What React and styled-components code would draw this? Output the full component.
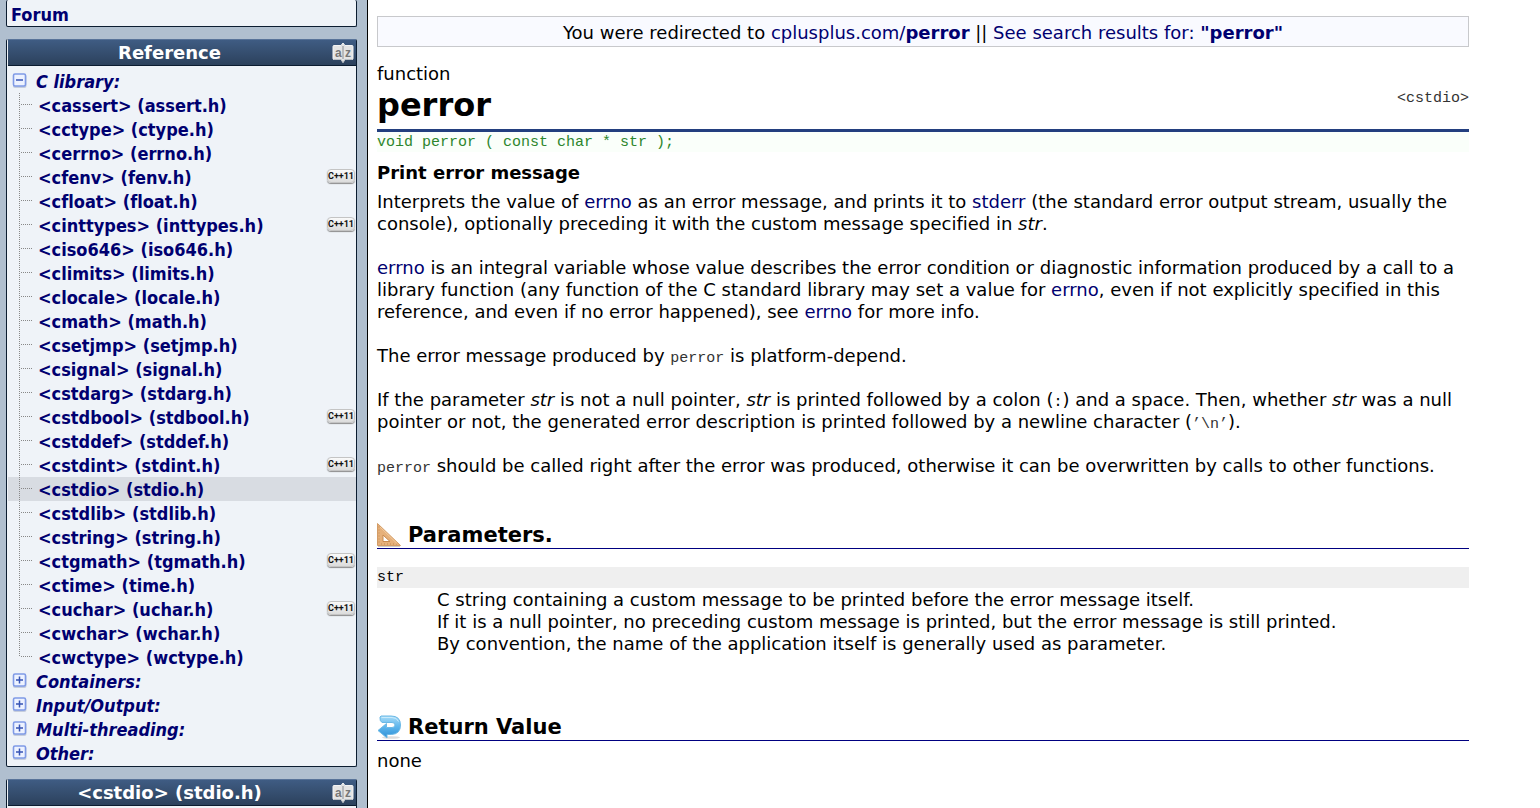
import React, { useState } from 'react'
import styled, { createGlobalStyle } from 'styled-components';

const GlobalStyle = createGlobalStyle`
  body {
    margin: 0;
    background: white;
    color: black;
    font-family: Verdana, "DejaVu Sans", sans-serif;
    font-size: 18px;
    font-variant-ligatures: none;
    line-height: 22px;
  }

  a {
    color: #000070;
    text-decoration: none;
  }

  a:hover {
    text-decoration: underline;
  }
`;

const Page = styled.div`
  display: flex;
  height: 100vh;
  overflow: hidden;
`;

const Sidebar = styled.nav`
  flex: none;
  box-sizing: border-box;
  width: 368px;
  padding: 0 10px 0 6px;
  border-right: 1px solid black;
  background: #b0bfcf;
  font-family: Tahoma, "DejaVu Sans Condensed", "DejaVu Sans", sans-serif;
  font-weight: bold;
`;

const Box = styled.section`
  margin-bottom: 12px;
  padding-left: 1px;
  border: 1px solid #0b1c30;
  border-top: 0;
  border-radius: 2px;
  background: #eff3f8;
`;

const BoxTitle = styled.h4`
  display: flex;
  align-items: center;
  justify-content: center;
  height: 25px;
  margin: 0;
  padding: 0 1px 0 0;
  border-top: 1px solid #587399;
  border-bottom: 1px solid #0b1c30;
  background: linear-gradient(#3f5c83, #2c415c);
  color: white;
  font-size: 18px;
  font-family: Verdana, "DejaVu Sans", sans-serif;
`;

const TitleText = styled.span`
  flex: 1;
  text-align: center;
`;

const IndexButton = styled.button`
  display: flex;
  padding: 0;
  border: 0;
  background: none;
  cursor: pointer;
`;

const TopItem = styled.a`
  display: block;
  padding: 4px 3px 0;
`;

const Tree = styled.ul`
  margin: 0;
  padding: ${props => props.$root ? '3px 0 1px' : '0'};
  list-style: none;
`;

const Row = styled.div`
  display: flex;
  align-items: center;
  height: 24px;
  padding-left: ${props => props.$group ? '4px' : '10px'};
  background: ${props => props.$current ? '#d8dce2' : 'none'};
`;

const RowLink = styled.a`
  flex: 1;
  padding-top: 2px;
`;

const GroupLink = styled.a`
  margin-left: 9px;
  padding-top: 2px;
  font-style: italic;
`;

const Toggle = styled.button`
  display: flex;
  padding: 0;
  border: 0;
  background: none;
  cursor: pointer;
`;

const Connector = styled.svg`
  flex: none;
  margin-right: 5px;
`;

const Badge = styled.span`
  width: 26px;
  height: 12px;
  margin: 0 1px 3px 0;
  border: 1px solid #c4c4c4;
  border-radius: 4px;
  background: linear-gradient(#fafafa, #dcdcdc);
  box-shadow: 0 1px 1px #8c8c8c;
  color: #111;
  font: bold 9px/12px Roboto, sans-serif;
  text-align: center;
`;

const Main = styled.main`
  flex: 1;
  min-width: 0;
  padding: 16px 71px 0 9px;
`;

const Notice = styled.div`
  padding: 5px 0 2px;
  border: 1px solid #c8c9cc;
  background: #f9faff;
  text-align: center;
`;

const Kind = styled.div`
  margin-top: 16px;
`;

const TitleBar = styled.header`
  display: flex;
  align-items: flex-start;
  justify-content: space-between;
  height: 44px;
  border-bottom: 3px solid #233f7f;
`;

const Title = styled.h1`
  margin: 0;
  font-size: 32px;
  line-height: 40px;
`;

const Code = styled.code`
  font-family: "Liberation Mono", monospace;
  font-size: 15px;
  line-height: 15px;
  color: ${props => props.$dim ? '#333' : 'black'};
`;

const Prototype = styled.div`
  height: 18px;
  padding-top: 2px;
  background: #fafffa;
  color: #2d862d;
  font: 15px/18px "Liberation Mono", monospace;
`;

const Summary = styled.div`
  margin: 10px 0 7px;
  font-weight: bold;
`;

const Paragraph = styled.p`
  margin: 0 0 22px;
`;

const Section = styled.section`
  margin-top: ${props => props.$space};
`;

const SectionTitle = styled.h3`
  display: flex;
  align-items: center;
  gap: 7px;
  height: 27px;
  margin: 0;
  border-bottom: 1px solid #000080;
  font-size: 21px;
`;

const Terms = styled.dl`
  margin: 18px 0 0;
`;

const Term = styled.dt`
  height: 21px;
  background: #efefef;
  font: 15px/21px "Liberation Mono", monospace;
`;

const Details = styled.dd`
  margin: 0 0 0 60px;
  padding-top: 1px;
`;

const Result = styled.div`
  margin-top: 9px;
`;

const headers = [
  ['cassert', 'assert.h'],
  ['cctype', 'ctype.h'],
  ['cerrno', 'errno.h'],
  ['cfenv', 'fenv.h', true],
  ['cfloat', 'float.h'],
  ['cinttypes', 'inttypes.h', true],
  ['ciso646', 'iso646.h'],
  ['climits', 'limits.h'],
  ['clocale', 'locale.h'],
  ['cmath', 'math.h'],
  ['csetjmp', 'setjmp.h'],
  ['csignal', 'signal.h'],
  ['cstdarg', 'stdarg.h'],
  ['cstdbool', 'stdbool.h', true],
  ['cstddef', 'stddef.h'],
  ['cstdint', 'stdint.h', true],
  ['cstdio', 'stdio.h'],
  ['cstdlib', 'stdlib.h'],
  ['cstring', 'string.h'],
  ['ctgmath', 'tgmath.h', true],
  ['ctime', 'time.h'],
  ['cuchar', 'uchar.h', true],
  ['cwchar', 'wchar.h'],
  ['cwctype', 'wctype.h'],
];

const groups = ['Containers:', 'Input/Output:', 'Multi-threading:', 'Other:'];

const AzIcon = () => (
  <svg width="24" height="22" viewBox="0 0 24 22">
    <path d="M3 3.500h7L12 1l2 2.500h7q1 0 1 1v12q0 1-1 1h-7L12 20.500l-2-3H3q-1 0-1-1v-12q0-1 1-1z" fill="#e4e4e4" stroke="#f4f4f4" />
    <path d="M3 17.500h7l2 3 2-3h7" fill="none" stroke="#9fa6ae" strokeWidth=".7" />
    <path d="M12 4v13" stroke="#8a8e93" />
    <text x="4" y="15" fontFamily="Liberation Sans" fontSize="12" fontWeight="bold" fill="#777">a</text>
    <text x="14" y="15" fontFamily="Liberation Sans" fontSize="12" fontWeight="bold" fill="#777">z</text>
  </svg>
)

const FoldIcon = ({ open }) => (
  <svg width="15" height="16" viewBox="0 0 15 16">
    <rect x="1" y="1.500" width="13.500" height="13.500" rx="2" fill="#c5cddc" />
    <rect x="1.500" y="1" width="12" height="12" rx="1.500" fill="#edf2ff" stroke="#7f9ae6" strokeWidth="1.600" />
    <path d={open ? 'M4 7h7' : 'M4 7h7M7.500 3.500v7'} stroke="#3653b4" strokeWidth="1.500" />
  </svg>
)

const Branch = ({ last }) => (
  <Connector width="15" height="24" viewBox="0 0 15 24">
    <path d={last ? 'M1.500 0v12' : 'M1.500 0v24'} stroke="#888" strokeDasharray="1 1" />
    <path d="M3 11.500h11" stroke="#888" strokeDasharray="1 1" />
  </Connector>
)

const SetSquareIcon = () => (
  <svg width="24" height="24" viewBox="0 0 24 24">
    <path d="M1 23h22v1H1z" fill="#cfc9c4" />
    <path d="M.5.500L23.500 22.500H.5z" fill="#e6b07a" stroke="#d39c66" />
    <path d="M6 12v6.500h7z" fill="#fff" stroke="#c98a50" />
    <path d="M2 3.500v18M4 21h17" stroke="#c08a55" strokeDasharray="1 2" />
    <path d="M3 4l17 16.500" stroke="#f2c99c" />
  </svg>
)

const ReturnIcon = () => (
  <svg width="24" height="24" viewBox="0 0 24 24">
    <defs>
      <linearGradient id="ret" x1="0" y1="0" x2="0" y2="1">
        <stop offset="0" stopColor="#a8dcf8" />
        <stop offset=".5" stopColor="#5db5ec" />
        <stop offset="1" stopColor="#2d8fd6" />
      </linearGradient>
    </defs>
    <ellipse cx="14" cy="22.500" rx="9" ry="1.300" fill="#ddd" />
    <path d="M4 1h10q9.500 0 9.500 9t-9 9.500H10V23L1 15.500 9.500 8.500v4H15q3 0 3-2.500t-3-2.500H5Q2.500 6 3 2z" fill="url(#ret)" stroke="#6cb9e6" strokeLinejoin="round" />
    <path d="M4.500 2.500H15q5 0 6.500 4" fill="none" stroke="#c9ebfc" />
  </svg>
)

const App = () => {

  const [opened, setOpened] = useState(true);

  const handleToggle = () => {
    setOpened(prevState => !prevState)
  }

  return (
    <>
      <GlobalStyle />
      <Page>
        <Sidebar>
          <Box>
            <TopItem href="#forum">Forum</TopItem>
          </Box>

          <Box>
            <BoxTitle>
              <TitleText>Reference</TitleText>
              <IndexButton aria-label="Alphabetical index"><AzIcon /></IndexButton>
            </BoxTitle>
            <Tree $root>
              <li>
                <Row $group>
                  <Toggle aria-label="Toggle C library" onClick={handleToggle}><FoldIcon open={opened} /></Toggle>
                  <GroupLink href="#clibrary">C library:</GroupLink>
                </Row>
                {opened && (
                  <Tree>
                    {headers.map(([name, file, cpp11], i) => (
                      <li key={name}>
                        <Row $current={name === 'cstdio'}>
                          <Branch last={i === headers.length - 1} />
                          <RowLink href={`#${name}`}>{`<${name}> (${file})`}</RowLink>
                          {cpp11 && <Badge>C++11</Badge>}
                        </Row>
                      </li>
                    ))}
                  </Tree>
                )}
              </li>
              {groups.map(group => (
                <li key={group}>
                  <Row $group>
                    <Toggle aria-label={`Toggle ${group}`}><FoldIcon /></Toggle>
                    <GroupLink href="#group">{group}</GroupLink>
                  </Row>
                </li>
              ))}
            </Tree>
          </Box>

          <Box>
            <BoxTitle>
              <TitleText>{'<cstdio> (stdio.h)'}</TitleText>
              <IndexButton aria-label="Alphabetical index"><AzIcon /></IndexButton>
            </BoxTitle>
            <Tree $root />
          </Box>
        </Sidebar>

        <Main>
          <Notice>
            You were redirected to <a href="#perror">cplusplus.com/<b>perror</b></a> || <a href="#search">See search results for: <b>"perror"</b></a>
          </Notice>

          <Kind>function</Kind>
          <TitleBar>
            <Title>perror</Title>
            <a href="#cstdio"><Code $dim>{'<cstdio>'}</Code></a>
          </TitleBar>
          <Prototype>void perror ( const char * str );</Prototype>
          <Summary>Print error message</Summary>

          <Paragraph>
            Interprets the value of <a href="#errno">errno</a> as an error message, and prints it to <a href="#stderr">stderr</a> (the standard error output stream, usually the console), optionally preceding it with the custom message specified in <i>str</i>.
          </Paragraph>
          <Paragraph>
            <a href="#errno">errno</a> is an integral variable whose value describes the error condition or diagnostic information produced by a call to a library function (any function of the C standard library may set a value for <a href="#errno">errno</a>, even if not explicitly specified in this reference, and even if no error happened), see <a href="#errno">errno</a> for more info.
          </Paragraph>
          <Paragraph>
            The error message produced by <Code $dim>perror</Code> is platform-depend.
          </Paragraph>
          <Paragraph>
            If the parameter <i>str</i> is not a null pointer, <i>str</i> is printed followed by a colon (<Code>:</Code>) and a space. Then, whether <i>str</i> was a null pointer or not, the generated error description is printed followed by a newline character (<Code $dim>’\n’</Code>).
          </Paragraph>
          <Paragraph>
            <Code $dim>perror</Code> should be called right after the error was produced, otherwise it can be overwritten by calls to other functions.
          </Paragraph>

          <Section $space="44px">
            <SectionTitle><SetSquareIcon />Parameters.</SectionTitle>
            <Terms>
              <Term>str</Term>
              <Details>
                C string containing a custom message to be printed before the error message itself.<br />
                If it is a null pointer, no preceding custom message is printed, but the error message is still printed.<br />
                By convention, the name of the application itself is generally used as parameter.
              </Details>
            </Terms>
          </Section>

          <Section $space="58px">
            <SectionTitle><ReturnIcon />Return Value</SectionTitle>
            <Result>none</Result>
          </Section>
        </Main>
      </Page>
    </>
  )
}

export default App
